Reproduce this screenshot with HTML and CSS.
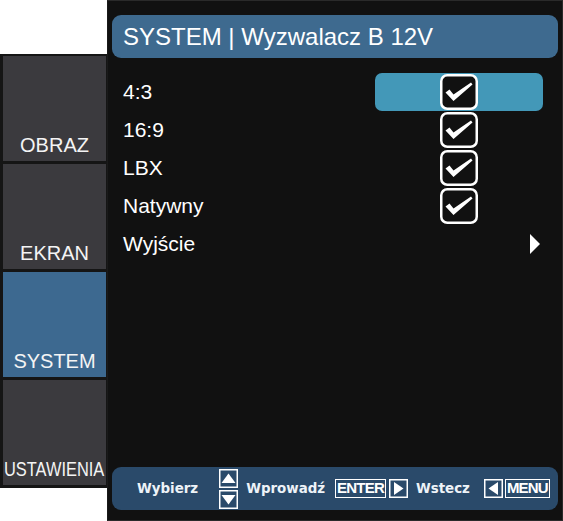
FILE: index.html
```html
<!DOCTYPE html>
<html lang="pl">
<head>
<meta charset="utf-8">
<title>SYSTEM | Wyzwalacz B 12V</title>
<link rel="stylesheet" href="styles.css">
</head>
<body>
<div class="screen">
  <nav class="sidebar">
    <div class="tab"><span class="tab-label">OBRAZ</span></div>
    <div class="tab"><span class="tab-label">EKRAN</span></div>
    <div class="tab active"><span class="tab-label">SYSTEM</span></div>
    <div class="tab"><span class="tab-label narrow">USTAWIENIA</span></div>
  </nav>
  <main class="panel">
    <header class="title">SYSTEM | Wyzwalacz B 12V</header>
    <ul class="list">
      <li class="row">
        <span class="label">4:3</span>
        <span class="value selected">
          <svg class="check" width="38" height="36" viewBox="0 0 38 36"><rect x="1.25" y="1.25" width="35.5" height="33.5" rx="6" fill="#111" stroke="#fff" stroke-width="2.5"/><path d="M5.5 18.5 L9.5 15.5 L13.5 20.5 L31 8.5 L32.5 10.5 L13.5 27 Z" fill="#fff"/></svg>
        </span>
      </li>
      <li class="row">
        <span class="label">16:9</span>
        <span class="value">
          <svg class="check" width="38" height="36" viewBox="0 0 38 36"><rect x="1.25" y="1.25" width="35.5" height="33.5" rx="6" fill="#111" stroke="#fff" stroke-width="2.5"/><path d="M5.5 18.5 L9.5 15.5 L13.5 20.5 L31 8.5 L32.5 10.5 L13.5 27 Z" fill="#fff"/></svg>
        </span>
      </li>
      <li class="row">
        <span class="label">LBX</span>
        <span class="value">
          <svg class="check" width="38" height="36" viewBox="0 0 38 36"><rect x="1.25" y="1.25" width="35.5" height="33.5" rx="6" fill="#111" stroke="#fff" stroke-width="2.5"/><path d="M5.5 18.5 L9.5 15.5 L13.5 20.5 L31 8.5 L32.5 10.5 L13.5 27 Z" fill="#fff"/></svg>
        </span>
      </li>
      <li class="row">
        <span class="label">Natywny</span>
        <span class="value">
          <svg class="check" width="38" height="36" viewBox="0 0 38 36"><rect x="1.25" y="1.25" width="35.5" height="33.5" rx="6" fill="#111" stroke="#fff" stroke-width="2.5"/><path d="M5.5 18.5 L9.5 15.5 L13.5 20.5 L31 8.5 L32.5 10.5 L13.5 27 Z" fill="#fff"/></svg>
        </span>
      </li>
      <li class="row">
        <span class="label">Wyjście</span>
        <span class="value end">
          <svg width="10" height="20" viewBox="0 0 10 20"><polygon points="0,0 10,10 0,20" fill="#fff"/></svg>
        </span>
      </li>
    </ul>
    <footer class="hints">
      <span class="hint w-select">Wybierz</span>
      <svg class="updown" width="19" height="40" viewBox="0 0 19 40"><rect x="0.75" y="0.75" width="17.5" height="17.5" fill="none" stroke="#fff" stroke-width="1.5"/><polygon points="2.5,14 9.5,4.5 16.5,14" fill="#fff"/><rect x="0.75" y="21.75" width="17.5" height="17.5" fill="none" stroke="#fff" stroke-width="1.5"/><polygon points="2.5,26 16.5,26 9.5,35.5" fill="#fff"/></svg>
      <span class="hint w-enter">Wprowadź</span>
      <span class="key">ENTER</span>
      <svg class="keybox" width="19" height="19" viewBox="0 0 19 19"><rect x="0.75" y="0.75" width="17.5" height="17.5" fill="none" stroke="#fff" stroke-width="1.5"/><polygon points="5,3 14.5,9.5 5,16" fill="#fff"/></svg>
      <span class="hint w-back">Wstecz</span>
      <svg class="keybox" width="19" height="19" viewBox="0 0 19 19"><rect x="0.75" y="0.75" width="17.5" height="17.5" fill="none" stroke="#fff" stroke-width="1.5"/><polygon points="14,3 4.5,9.5 14,16" fill="#fff"/></svg>
      <span class="key menu">MENU</span>
    </footer>
  </main>
</div>
</body>
</html>
```
FILE: styles.css
```css
* { box-sizing: border-box; }

html, body {
  margin: 0;
  padding: 0;
  background: #ffffff;
}

body {
  font-family: "Liberation Sans", Arial, sans-serif;
  color: #ffffff;
}

.screen {
  display: flex;
  align-items: flex-start;
  width: 563px;
  height: 521px;
}

/* ---------- sidebar ---------- */
.sidebar {
  width: 107px;
  margin-top: 54px;
  padding: 2px 1px 3px 3px;
  background: #151515;
  display: flex;
  flex-direction: column;
  gap: 3px;
}

.tab {
  height: 105px;
  background: #3b3a3e;
  display: flex;
  align-items: flex-end;
  justify-content: center;
  padding-bottom: 4px;
  font-size: 20px;
  line-height: 24px;
  color: #f4f4f4;
  overflow: visible;
  white-space: nowrap;
}

.tab.active {
  background: #3d6990;
}

.tab-label {
  display: inline-block;
}

.tab-label.narrow {
  transform: scaleX(0.82);
}

/* ---------- main panel ---------- */
.panel {
  width: 456px;
  height: 521px;
  background: #111111;
  border: 1px solid #2a2a2a;
  border-left-color: #1a1a1a;
  padding: 14px 4px 10px 4px;
  display: flex;
  flex-direction: column;
}

.title {
  height: 43px;
  line-height: 43px;
  padding-left: 11px;
  background: #3e6a8f;
  border-radius: 9px;
  font-size: 24px;
  color: #ffffff;
}

.list {
  list-style: none;
  margin: 15px 0 0 0;
  padding: 0;
}

.row {
  display: flex;
  align-items: center;
  height: 38px;
}

.label {
  flex: 1;
  padding-left: 11px;
  font-size: 21px;
  line-height: 38px;
}

.value {
  width: 168px;
  height: 38px;
  margin-right: 15px;
  display: flex;
  align-items: center;
  justify-content: center;
  border-radius: 7px;
}

.value.selected {
  background: #4398b8;
}

.value.end {
  justify-content: flex-end;
  padding-right: 3px;
}

.check {
  display: block;
}

/* ---------- footer hints ---------- */
.hints {
  margin-top: auto;
  height: 43px;
  background: #2a4a6a;
  border-radius: 9px;
  display: flex;
  align-items: center;
  padding-left: 25px;
  font-family: "DejaVu Sans", Verdana, sans-serif;
  font-weight: bold;
  font-size: 13.4px;
  color: #eef3f8;
}

.hint {
  white-space: nowrap;
}

.w-select { margin-right: 21px; }
.updown { display: block; margin-right: 8px; }
.w-enter { margin-right: 10px; }
.w-back { margin-left: 8px; margin-right: 11px; }

.keybox {
  display: block;
  margin-left: 3px;
}

.key {
  display: inline-block;
  height: 19px;
  border: 1.5px solid #ffffff;
  padding: 0 1px;
  font-family: "Liberation Sans", Arial, sans-serif;
  font-weight: bold;
  font-size: 15px;
  line-height: 16px;
  letter-spacing: -0.8px;
  color: #ffffff;
}

.key.menu {
  margin-left: 2px;
}
```
